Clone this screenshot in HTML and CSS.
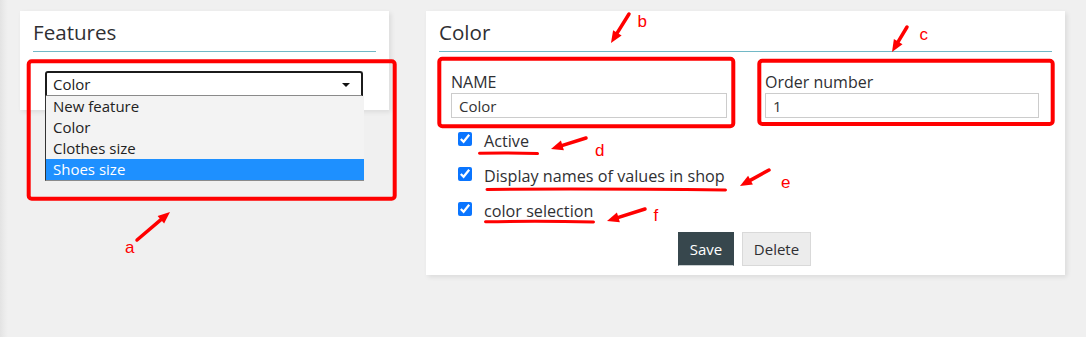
FILE: index.html
```html
<!DOCTYPE html>
<html lang="en">
<head>
<meta charset="utf-8">
<title>Features</title>
<link rel="stylesheet" href="styles.css">
</head>
<body>
<div class="page">
  <section class="panel panel-left">
    <h2 class="panel-title">Features</h2>
    <div class="select-wrap">
      <div class="select">
        <span class="select-value">Color</span>
        <span class="caret"></span>
      </div>
      <ul class="options">
        <li class="option">New feature</li>
        <li class="option">Color</li>
        <li class="option">Clothes size</li>
        <li class="option selected">Shoes size</li>
      </ul>
    </div>
  </section>

  <section class="panel panel-right">
    <h2 class="panel-title">Color</h2>
    <div class="fields">
      <div class="field">
        <label class="field-label">NAME</label>
        <input class="field-input" type="text" value="Color">
      </div>
      <div class="field">
        <label class="field-label">Order number</label>
        <input class="field-input" type="text" value="1">
      </div>
    </div>
    <div class="checks">
      <label class="check"><input type="checkbox" checked><span>Active</span></label>
      <label class="check"><input type="checkbox" checked><span>Display names of values in shop</span></label>
      <label class="check"><input type="checkbox" checked><span>color selection</span></label>
    </div>
    <div class="actions">
      <button class="btn btn-save">Save</button>
      <button class="btn btn-delete">Delete</button>
    </div>
  </section>
</div>

<svg class="annotations" width="1086" height="337" viewBox="0 0 1086 337">
  <g fill="none" stroke="#ff0000" stroke-width="4">
    <rect x="28.7" y="61.3" width="366" height="137.4" rx="3"/>
    <rect x="439.3" y="58.7" width="294" height="67.6" rx="3"/>
    <rect x="759.3" y="60.7" width="293.4" height="63.3" rx="3"/>
  </g>
  <g fill="none" stroke="#ff0000" stroke-linecap="round">
    <path d="M137 240 L163.9 217.2" stroke-width="3.5"/>
    <path d="M629 14 L615.2 36.2" stroke-width="3.5"/>
    <path d="M907 27 L896.1 45.1" stroke-width="3.5"/>
    <path d="M586 138 L558.6 146.6" stroke-width="3.5"/>
    <path d="M769 170 L747 182.1" stroke-width="3.5"/>
    <path d="M645 209 L614.6 218.6" stroke-width="3.5"/>
    <path d="M479.5 153.3 Q510 152.6 537.5 153.6" stroke-width="3"/>
    <path d="M487 189.4 Q600 188.6 725.5 190" stroke-width="3"/>
    <path d="M485.5 221.8 Q540 220.8 593.5 222" stroke-width="3"/>
  </g>
  <g fill="#ff0000">
    <polygon points="170,212 164.1,223.6 157.6,216"/>
    <polygon points="611,43 621.6,35.4 613.1,30.2"/>
    <polygon points="892,52 902.5,44.3 893.9,39.1"/>
    <polygon points="551,149 563.9,150.2 560.9,140.6"/>
    <polygon points="740,186 752.9,184.6 748.1,175.8"/>
    <polygon points="607,221 619.9,222.2 616.9,212.6"/>
  </g>
  <g class="letters" fill="#ff0000">
    <text x="125" y="253.3">a</text>
    <text x="637.5" y="26.7">b</text>
    <text x="919.5" y="40">c</text>
    <text x="595" y="156">d</text>
    <text x="781" y="188.3">e</text>
    <text x="653.5" y="221">f</text>
  </g>
</svg>
</body>
</html>
```

FILE: styles.css
```css
* {
  box-sizing: border-box;
}

html, body {
  margin: 0;
  padding: 0;
}

body {
  width: 1086px;
  height: 337px;
  overflow: hidden;
  position: relative;
  background: linear-gradient(90deg, #e3e3e3 0, #ececec 5px, #f0f0f0 8px, #f0f0f0 100%);
  font-family: "Open Sans", "DejaVu Sans", sans-serif;
  color: #333;
}

.page {
  display: flex;
  align-items: flex-start;
  gap: 37px;
  padding: 11px 0 0 20px;
}

.panel {
  background: #fff;
  box-shadow: 2px 2px 5px rgba(0, 0, 0, 0.09);
  padding: 0 13px;
}

.panel-left {
  width: 369px;
  padding-bottom: 14px;
}

.panel-right {
  width: 639px;
  padding-bottom: 9px;
}

.panel-title {
  margin: 0;
  padding: 8px 0 5px;
  font-size: 20.6px;
  font-weight: 400;
  line-height: 27px;
  color: #2f2f33;
  border-bottom: 1px solid #72b8c6;
}

/* select + open dropdown */
.select-wrap {
  position: relative;
  width: 318px;
  margin: 19px 0 0 12px;
}

.select {
  height: 25px;
  display: flex;
  align-items: center;
  justify-content: space-between;
  padding: 0 11px 0 7px;
  border: 2px solid #1b1b1b;
  border-bottom: 1px solid #8a8a8a;
  border-radius: 3px 3px 0 0;
  background: #fff;
  font-size: 15px;
  color: #222;
}

.select-value {
  margin-left: -1px;
}

.caret {
  width: 0;
  height: 0;
  margin-top: 1px;
  border-left: 4px solid transparent;
  border-right: 4px solid transparent;
  border-top: 4.5px solid #111;
}

.options {
  position: absolute;
  left: 0;
  top: 25px;
  width: 319px;
  margin: 0;
  padding: 0;
  list-style: none;
  background: #f3f3f3;
  border-left: 1px solid #333;
  border-bottom: 1px solid #8a8a8a;
}

.option {
  height: 21px;
  line-height: 21px;
  padding-left: 7px;
  font-size: 15px;
  color: #222;
}

.option.selected {
  background: #1e90ff;
  color: #fff;
}

/* form */
.fields {
  display: grid;
  grid-template-columns: 276px 274px;
  column-gap: 38px;
  padding-left: 12px;
  margin-top: 19px;
}

.field-label {
  display: block;
  font-size: 16px;
  line-height: 22px;
  color: #2f2f33;
}

.field-input {
  display: block;
  width: 100%;
  height: 25px;
  margin: 0;
  padding: 0 7px;
  border: 1px solid #cccccc;
  border-radius: 0;
  font-family: "Open Sans", "DejaVu Sans", sans-serif;
  font-size: 15px;
  color: #333;
  background: #fff;
}

.checks {
  margin-top: 12px;
  padding-left: 19px;
  display: flex;
  flex-direction: column;
  gap: 13px;
}

.check {
  display: flex;
  align-items: flex-start;
  gap: 12px;
  font-size: 16.2px;
  line-height: 22px;
  color: #2f2f33;
}

.check input {
  width: 14px;
  height: 14px;
  margin: 2px 0 0 0;
  accent-color: #0a75ff;
}

.actions {
  display: flex;
  justify-content: center;
  gap: 8px;
  margin-top: 10px;
  padding-right: 2px;
}

.btn {
  height: 34px;
  margin: 0;
  font-family: "Open Sans", "DejaVu Sans", sans-serif;
  font-size: 15px;
  border-radius: 0;
  cursor: pointer;
}

.btn-save {
  width: 56px;
  background: #37474d;
  color: #fff;
  border: 1px solid #37474d;
  border-bottom-color: #c9cfd1;
}

.btn-delete {
  width: 69px;
  background: #ececec;
  color: #2f2f33;
  border: 1px solid #d9d9d9;
}

/* red annotation overlay */
.annotations {
  position: absolute;
  left: 0;
  top: 0;
  pointer-events: none;
}

.letters text {
  font-family: "Liberation Sans", Arial, sans-serif;
  font-size: 17px;
}
```
